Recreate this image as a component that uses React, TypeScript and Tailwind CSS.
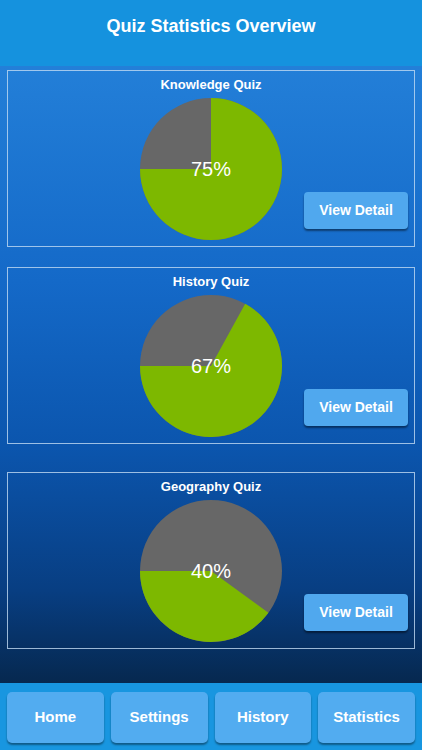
const quizzes = [
  { title: "Knowledge Quiz", pct: 75 },
  { title: "History Quiz", pct: 67 },
  { title: "Geography Quiz", pct: 40 },
];

function Pie({ pct }: { pct: number }) {
  const r = 71;
  const c = 71;
  const end = 270;
  const start = end - (pct / 100) * 360;
  const pt = (deg: number) => {
    const a = (deg * Math.PI) / 180;
    return [c + r * Math.sin(a), c - r * Math.cos(a)];
  };
  const [x1, y1] = pt(start);
  const [x2, y2] = pt(end);
  const large = pct > 50 ? 1 : 0;
  return (
    <svg width="142" height="142" viewBox="0 0 142 142">
      <circle cx={c} cy={c} r={r} fill="#676767" />
      <path
        d={`M${c} ${c} L${x1} ${y1} A${r} ${r} 0 ${large} 1 ${x2} ${y2} Z`}
        fill="#7db800"
      />
    </svg>
  );
}

function QuizCard({ title, pct, className }: { title: string; pct: number; className: string }) {
  return (
    <div className={`relative h-[177px] border-[1.5px] border-[#c2dbf3]/80 ${className}`}>
      <p className="pt-[6px] text-center text-[13px] font-bold leading-[16px] text-white">{title}</p>
      <div className="relative mx-auto mt-[5px] h-[142px] w-[142px]">
        <Pie pct={pct} />
        <span className="absolute inset-0 flex items-center justify-center text-[20px] text-white">
          {pct}%
        </span>
      </div>
      <button className="absolute bottom-[17px] right-[6px] h-[37px] w-[104px] rounded-[4px] bg-[#50a8ee] text-[14px] font-bold text-white shadow-[0_2px_2px_rgba(0,0,0,0.45)]">
        View Detail
      </button>
    </div>
  );
}

export default function App() {
  return (
    <div className="flex h-[750px] w-[422px] flex-col overflow-hidden font-['Liberation_Sans',Arial,sans-serif]">
      <header className="flex h-[66px] shrink-0 items-start justify-center bg-[#1592de] pt-[15px]">
        <h1 className="text-[18px] font-bold leading-[22px] text-white">Quiz Statistics Overview</h1>
      </header>

      <main className="flex-1 bg-[linear-gradient(180deg,#237fd8_0%,#1469c8_35%,#0b55ad_62%,#083e82_85%,#06284f_100%)] px-[7px] pt-[4px]">
        <QuizCard title={quizzes[0].title} pct={quizzes[0].pct} className="" />
        <QuizCard title={quizzes[1].title} pct={quizzes[1].pct} className="mt-[20px]" />
        <QuizCard title={quizzes[2].title} pct={quizzes[2].pct} className="mt-[28px]" />
      </main>

      <nav className="grid h-[67px] shrink-0 grid-cols-4 gap-[7px] bg-[#1896e0] px-[7px] pt-[9px]">
        {["Home", "Settings", "History", "Statistics"].map((item) => (
          <button
            key={item}
            className="h-[51px] rounded-[5px] bg-[#52acf0] text-[15px] font-bold text-white shadow-[0_2px_2px_rgba(0,0,0,0.4)]"
          >
            {item}
          </button>
        ))}
      </nav>
    </div>
  );
}
